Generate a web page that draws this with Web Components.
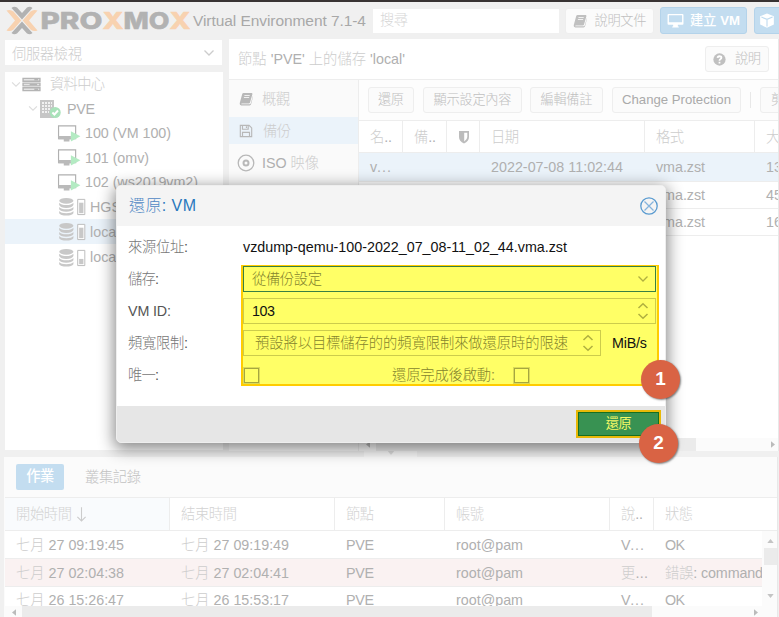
<!DOCTYPE html>
<html lang="zh-Hant"><head><meta charset="utf-8"><title>Proxmox Virtual Environment</title>
<style>
html,body{margin:0;width:779px;height:617px;overflow:hidden;background:#f0f0f0;font:14.3px/20px "Liberation Sans","Noto Sans CJK TC",sans-serif;color:#b0b0b0;--cjk:#cdcdcd}
</style></head><body><pve-app></pve-app>
<script>
const define=(name,html)=>{
  const tpl=document.createElement('template');
  tpl.innerHTML='<style>*{box-sizing:border-box}:host{box-sizing:border-box;display:block}</style>'+html;
  customElements.define(name,class extends HTMLElement{
    connectedCallback(){if(!this.shadowRoot)this.attachShadow({mode:'open'}).append(tpl.content.cloneNode(true));}
  });
};

// One line of text: Han runs take their own tint, and w spreads the line to a given width.
customElements.define('ui-text',class extends HTMLElement{
  connectedCallback(){
    if(this.shadowRoot)return;
    const s=this.getAttribute('t'),r=this.attachShadow({mode:'open'});
    r.innerHTML='<style>:host{display:inline-block;white-space:nowrap;flex:none}.h{color:var(--cjk);font-weight:var(--hw,300)}</style>';
    const box=document.createElement('span');
    for(const run of s.match(/[\u3000-\u9fff]+|[^\u3000-\u9fff]+/g)){
      const e=document.createElement('span');e.textContent=run;
      if(/[\u3000-\u9fff]/.test(run))e.className='h';
      box.append(e);
    }
    r.append(box);
    const w=+this.getAttribute('w');
    if(w)box.style.letterSpacing=((w-box.getBoundingClientRect().width)/(s.length-1))+'px';
    if(w)this.style.width=w+'px';
  }
});

const icons={
 book:['0 0 16 16','<path fill="currentColor" d="M5.2 1h9.3q1.2.2.8 1.6l-2.8 9.6q-.3.8-1.3.8H3.4q-1.2 0-.8 1h9.6q.8 0 1.2-.9L16 4.2v1.3L13.8 14q-.4 1.3-1.7 1.3H2.6Q.5 15 .8 12.8L3.6 2.5Q4 1.1 5.2 1z"/><path stroke="#f7f7f7" d="M6.2 4h6M5.6 6.3h6"/>'],
 monitor:['0 0 18 16','<path fill="currentColor" fill-rule="evenodd" d="M1.500 1h15q1 0 1 1v9.500q0 1-1 1H11.500V14.500h1v1h-7v-1h1v-2H1.500q-1 0-1-1V2q0-1 1-1zM2 2.400v7.400h14V2.400z"/>'],
 cube:['0 0 16 16','<path fill="currentColor" d="M8 .5l7.300 3v8.800L8 15.800.7 12.300V3.500z"/><path fill="none" stroke="#c0dcf0" stroke-width="1.200" d="M2 4.300l6 2.500 6-2.500M8 6.800V14.500"/>'],
 help:['0 0 14 14','<circle cx="7" cy="7" r="6.600" fill="currentColor"/><path fill="none" stroke="#fff" stroke-width="1.900" d="M4.900 5.300Q5 3.500 7 3.500t2.100 1.700Q9.100 6.200 7.800 6.800 7 7.200 7 8.400M7 9.400v1.900"/>'],
 save:['0 0 16 16','<path fill="none" stroke="currentColor" stroke-width="1.300" d="M1.500 1.500h10L14.500 4.500v10h-13zM4 14.500V9.500h8v5M4 1.500v4.500h6.500v-4.500M8.500 2.500v2"/>'],
 disc:['0 0 18 18','<g fill="none" stroke="currentColor"><circle cx="9" cy="9" r="7.800" stroke-width="1.300"/><circle cx="9" cy="9" r="2.500" stroke-width="2"/></g>'],
 shield:['0 0 12 14','<path fill="currentColor" fill-rule="evenodd" d="M1 1h10v6q0 4-5 6.500Q1 11 1 7zM6.200 2.700v8.800Q9.300 9.500 9.300 7V2.700z"/>'],
 servers:['0 0 20 16','<g fill="none" stroke="currentColor" stroke-width="1.500"><path d="M1 1.500h18v3H1zM1 6.500h18v3H1zM1 11.500h18v3H1z" fill="#e4e4e4"/><path d="M13 3h4M8 8h8M13 13h4"/></g>'],
 node:['0 0 22 20','<path fill="#c6c6c6" d="M1 1h14v18H1z"/><path stroke="#fff" stroke-width="1.500" stroke-dasharray="2 1" d="M3 4h10M3 7h10M3 10h9M3 13h7"/><circle cx="16.200" cy="13.500" r="5.500" fill="#a9e2ba"/><path fill="none" stroke="#fff" stroke-width="1.900" d="M13.400 13.500l2 2 3.600-4"/>'],
 vm:['0 0 24 20','<path fill="#fff" stroke="#b0b0b0" stroke-width="1.200" d="M1 2h18v13.500H1z"/><path fill="#bababa" d="M1 12.500h13V16h-1.500v2.500h-6V16H1z"/><path fill="#b4ebc3" d="M14 7.500l10 5.500-10 5.500z"/>'],
 store:['0 0 28 20','<g fill="#c8c8c8"><ellipse cx="8" cy="4" rx="7.500" ry="3"/><path d="M.5 6q2 2.500 7.500 2.500T15.500 6v2.500Q14 11.500 8 11.500T.5 8.500zM.5 10.500Q2.500 13 8 13t7.500-2.500V13Q14 15.500 8 15.500T.5 13zM.5 14.700Q2.500 17 8 17t7.500-2.300V17Q14 19.500 8 19.500T.5 17z"/></g><path fill="#fff" stroke="#bbb" d="M20 2.500h7.500v16H20z"/><path fill="#c8c8c8" d="M21.5 6h4.500v11h-4.500z"/>'],
 down:['0 0 12 8','<path fill="none" stroke="currentColor" stroke-width="1.300" d="M1.500 1.500L6 6l4.500-4.500"/>'],
 spin:['0 0 12 18','<path fill="none" stroke="currentColor" stroke-width="1.500" d="M1.500 6L6 1.700 10.500 6M1.500 12L6 16.300 10.500 12"/>'],
 close:['0 0 18 18','<g fill="none" stroke="#5a9bd0" stroke-width="1.300"><circle cx="9" cy="9" r="8.200"/><path stroke="#85b3dc" d="M4.500 4.500l9 9m0-9l-9 9"/></g>'],
 arrow:['0 0 12 18','<path fill="none" stroke="currentColor" stroke-width="1.200" d="M6 1v15M1.500 11.500L6 16l4.500-4.500"/>'],
 left:['0 0 5 8','<path fill="currentColor" d="M5 0v8L0 4z"/>'],
 right:['0 0 5 8','<path fill="currentColor" d="M0 0v8l5-4z"/>'],
 tup:['0 0 8 5','<path fill="currentColor" d="M0 5h8L4 0z"/>'],
 tdown:['0 0 8 5','<path fill="currentColor" d="M0 0h8L4 5z"/>']
};
icons.storelow=[icons.store[0],icons.store[1].replace('M21.5 6h4.500v11','M21.5 11.500h4.500v5.500')];
customElements.define('ui-icon',class extends HTMLElement{
  connectedCallback(){
    if(this.shadowRoot)return;
    const [vb,body]=icons[this.getAttribute('n')],w=this.getAttribute('w'),h=this.getAttribute('h');
    this.attachShadow({mode:'open'}).innerHTML=`<style>:host{display:block;flex:none;width:${w}px;height:${h}px}svg{display:block}</style><svg width="${w}" height="${h}" viewBox="${vb}">${body}</svg>`;
  }
});

define('ui-button',`<style>:host{display:flex;align-items:center;justify-content:center;flex:none;height:26px;border:1px solid #eee;border-radius:3px;background:#fbfbfb;font-size:13.2px;--cjk:#c0c0c0;color:#aaa;overflow:hidden}
:host([primary]){background:#c3ddf0;border-color:#b4d3ea;color:#fff;--cjk:#fff;--hw:500;font-weight:bold}</style><slot></slot>`);

define('pve-logo',`<style>:host{width:185px;height:32px;flex:none}svg{display:block}</style>
<svg width="185" height="32" viewBox="0 0 185 32"><g fill="#b2b2b2"><path d="M5.500 3Q8 .8 11 2.500L16 8l5-5.500q3-1.700 5.500.5L16 14.500z"/><path d="M5.500 28Q8 30.200 11 28.500L16 23l5 5.500q3 1.700 5.500-.5L16 16.500z"/></g>
<g fill="#f8d2b0"><path d="M.5 5.500Q4.500 4 7.500 6.500L15.300 15.500 7.500 24.500Q4.500 27 .5 25.500L9 15.500z"/><path d="M31.500 5.500Q27.500 4 24.500 6.500L16.700 15.500l7.800 9q3 2.500 7 1L23 15.500z"/></g>
<g font-family="Inter" font-weight="800" font-size="23.500" fill="#b2b2b2" stroke="#b2b2b2" stroke-width=".5"><text x="34.500" y="24" textLength="62" lengthAdjust="spacingAndGlyphs">PRO</text><text x="117.500" y="24" textLength="46" lengthAdjust="spacingAndGlyphs">MO</text><g fill="#f8d2b0" stroke="#f8d2b0"><text x="96.500" y="24" textLength="21" lengthAdjust="spacingAndGlyphs">X</text><text x="163.500" y="24" textLength="21" lengthAdjust="spacingAndGlyphs">X</text></g></g></svg>`);

define('pve-header',`<style>:host{display:flex;height:37px;padding-left:6px;align-items:center;overflow:hidden}
.title{margin-left:2px;margin-top:1px;font-size:15.500px;color:#a8a8a8}.search{flex:none;width:186px;height:24px;margin-left:7px;background:#fff;padding:1px 7px;--cjk:#d6d6d6}
ui-button{margin-left:6px}</style>
<pve-logo></pve-logo><ui-text class="title" t="Virtual Environment 7.1-4" w="173"></ui-text><div class="search"><ui-text t="搜尋" w="28"></ui-text></div>
<ui-button style="width:89px;margin-left:6px;gap:8px"><ui-icon n="book" w="14" h="14" style="color:#c0c0c0"></ui-icon><ui-text t="說明文件" w="52"></ui-text></ui-button>
<ui-button primary style="width:87px;height:27px;margin-left:6px;gap:6px"><ui-icon n="monitor" w="17" h="15"></ui-icon><ui-text t="建立 VM" w="50"></ui-text></ui-button>
<ui-button primary style="width:50px;height:27px;margin-left:7px;justify-content:flex-start;padding-left:4px"><ui-icon n="cube" w="16" h="15"></ui-icon></ui-button>`);

define('tree-row',`<style>:host{display:flex;align-items:center;height:25px;gap:8px;overflow:hidden}:host([on]){background:#ebf3fa}</style><slot></slot>`);
define('pve-tree',`<style>:host{width:218px;display:flex;flex-direction:column;gap:7px}
.sel{height:25px;width:217px;background:#fff;display:flex;align-items:center;justify-content:space-between;padding:3px 7px 0}
.tree{background:#fff;height:378px;overflow:hidden}tree-row{height:24.500px}</style>
<div class="sel"><ui-text t="伺服器檢視" w="70"></ui-text><ui-icon n="down" w="12" h="8" style="color:#ccc;margin-bottom:3px"></ui-icon></div>
<div class="tree">
<tree-row style="padding-left:5px;gap:0"><ui-icon n="down" w="12" h="7" style="color:#ddd"></ui-icon><ui-icon n="servers" w="19" h="15" style="color:#b4b4b4;margin-right:9px"></ui-icon><ui-text t="資料中心" w="55"></ui-text></tree-row>
<tree-row style="padding-left:22px;gap:0"><ui-icon n="down" w="12" h="7" style="color:#ddd"></ui-icon><ui-icon n="node" w="22" h="20" style="margin-right:6px"></ui-icon><ui-text t="PVE" w="28"></ui-text></tree-row>
<tree-row style="padding-left:52px;gap:4px"><ui-icon n="vm" w="24" h="19"></ui-icon><ui-text t="100 (VM 100)" w="86"></ui-text></tree-row>
<tree-row style="padding-left:52px;gap:4px"><ui-icon n="vm" w="24" h="19"></ui-icon><ui-text t="101 (omv)" w="64"></ui-text></tree-row>
<tree-row style="padding-left:52px;gap:4px"><ui-icon n="vm" w="24" h="19"></ui-icon><ui-text t="102 (ws2019vm2)" w="113"></ui-text></tree-row>
<tree-row style="padding-left:53px;gap:4px;"><ui-icon n="store" w="28" h="19"></ui-icon><ui-text t="HGST"></ui-text></tree-row>
<tree-row on style="padding-left:53px;gap:4px;height:25px"><ui-icon n="store" w="28" h="19"></ui-icon><ui-text t="local"></ui-text></tree-row>
<tree-row style="padding-left:53px;gap:4px;height:26px"><ui-icon n="storelow" w="28" h="19"></ui-icon><ui-text t="local"></ui-text></tree-row>
</div>`);

define('data-row',`<style>:host{display:grid;align-items:center;overflow:hidden;height:27px;border-bottom:1px solid #ededed}::slotted(*){margin-left:11px}
:host([head]) ::slotted(*){align-self:stretch;display:flex!important;align-items:center}</style><slot></slot>`);

define('scroll-x',`<style>:host{display:flex;align-items:center;justify-content:space-between;background:#fbfbfb;color:#bbb;overflow:hidden}.l{width:17px;display:flex;justify-content:center}.thumb{height:100%;background:#ebebeb;width:var(--thumb)}.r{margin-left:auto;margin-right:var(--end,3px)}</style>
<span class="l"><ui-icon n="left" w="4" h="7"></ui-icon></span><span class="thumb"></span><span class="r"><ui-icon n="right" w="4" h="7"></ui-icon></span>`);

define('pve-content',`<style>:host{width:550px;height:412px;background:#fff;display:grid;grid-template:41px 1fr / 130px 1fr;border-right:1px solid #e8e8e8;overflow:hidden}
.top{grid-column:1/3;display:flex;align-items:center;justify-content:space-between;padding:0 9px;border-bottom:1px solid #ededed}
.side{background:#fafafa;border-right:1px solid #ededed;padding-top:5px}
.item{display:flex;align-items:center;height:27px;padding-left:10px;gap:9px;margin-bottom:5px}.item ui-icon{color:#b8b8b8}.item.on{background:#ebf3fa}
.main{display:flex;flex-direction:column;min-width:0;overflow:hidden}
.bar{height:41px;flex:none;display:flex;align-items:center;border-bottom:1px solid #ededed;padding-left:9px;background:#fdfdfd;overflow:hidden}
data-row{grid-template-columns:44px 44px 33px 165px 110px 100px;flex:none}
.c{height:32px;border-right:1px solid #ededed;margin:0!important;padding-left:11px}
scroll-x{margin-top:auto;height:13px;--thumb:320px}</style>
<div class="top"><ui-text t="節點 'PVE' 上的儲存 'local'" w="167"></ui-text><ui-button style="width:64px;gap:9px"><ui-icon n="help" w="13" h="13" style="color:#c0c0c0"></ui-icon><ui-text t="說明" w="26"></ui-text></ui-button></div>
<div class="side"><div class="item"><ui-icon n="book" w="14" h="14"></ui-icon><ui-text t="概觀" w="28"></ui-text></div>
<div class="item on" style="gap:10px"><ui-icon n="save" w="14" h="14"></ui-icon><ui-text t="備份" w="28"></ui-text></div>
<div class="item" style="gap:7px;padding-left:8px"><ui-icon n="disc" w="18" h="18"></ui-icon><ui-text t="ISO 映像" w="57"></ui-text></div></div>
<div class="main"><div class="bar"><ui-button style="width:46px"><ui-text t="還原" w="26"></ui-text></ui-button><ui-button style="width:99px;margin-left:9px"><ui-text t="顯示設定內容" w="78"></ui-text></ui-button><ui-button style="width:73px;margin-left:8px"><ui-text t="編輯備註" w="52"></ui-text></ui-button><ui-button style="width:129px;margin-left:9px"><ui-text t="Change Protection" w="109"></ui-text></ui-button><span style="flex:none;width:1px;height:16px;background:#e8e8e8;margin:0 9px"></span><ui-button style="width:60px;justify-content:flex-start;padding-left:10px"><ui-text t="剪除"></ui-text></ui-button></div>
<data-row head style="height:32px"><div class="c"><ui-text t="名.." w="22"></ui-text></div><div class="c"><ui-text t="備.." w="22"></ui-text></div><div class="c"><ui-icon n="shield" w="12" h="14" style="color:#bcbcbc"></ui-icon></div><div class="c"><ui-text t="日期" w="28"></ui-text></div><div class="c"><ui-text t="格式" w="28"></ui-text></div><div class="c" style="border:0"><ui-text t="大小"></ui-text></div></data-row>
<data-row style="background:#ebf3fa;height:29px"><ui-text t="v..." w="21"></ui-text><i></i><i></i><ui-text t="2022-07-08 11:02:44" w="132"></ui-text><ui-text t="vma.zst" w="49"></ui-text><ui-text t="13"></ui-text></data-row>
<data-row><i></i><i></i><i></i><i></i><ui-text t="vma.zst" w="49"></ui-text><ui-text t="45"></ui-text></data-row>
<data-row><i></i><i></i><i></i><i></i><ui-text t="vma.zst" w="49"></ui-text><ui-text t="16"></ui-text></data-row>
<scroll-x></scroll-x></div>`);

define('task-log',`<style>:host{margin-left:4px;width:774px;height:160px;background:#fbfbfb;border-right:1px solid #e8e8e8;overflow:hidden;display:flex;flex-direction:column}
.tabs{height:40px;flex:none;display:flex;align-items:center;padding-left:12px;gap:21px;--cjk:#c2c2c2}.tab{width:48px;height:26px;background:#c3ddf0;border-radius:2px;text-align:center;line-height:25px;--cjk:#fff;--hw:500}
.grid{position:relative;flex:1;margin-left:1px;border-top:1px solid #ededed;background:#fff;display:flex;flex-direction:column}
data-row{grid-template-columns:165px 165px 110px 165px 44px 124px;height:28px;flex:none}data-row.h{height:33px;--cjk:#d3d3d3}
.c{border-right:1px solid #ededed;margin:0!important;padding-left:11px}
.rows{display:flex;height:75px;flex:none}.list{width:757px;overflow:hidden}.red{background:#faf2f2}
.v{width:15px;display:flex;flex-direction:column;align-items:center;justify-content:space-between;background:#fbfbfb;color:#c4c4c4;padding:8px 0 8px 2px}.thumb{width:13px;height:17px;background:#ebebeb;margin-bottom:24px}
scroll-x{--thumb:630px;--end:19px;height:12px;margin:0}</style>
<div class="tabs"><div class="tab"><ui-text t="作業" w="28"></ui-text></div><ui-text t="叢集記錄" w="56"></ui-text></div>
<div class="grid"><data-row head class="h"><div class="c" style="background:#f9fbfd;gap:4px"><ui-text t="開始時間" w="56"></ui-text><ui-icon n="arrow" w="11" h="17" style="color:#ccc"></ui-icon></div><div class="c"><ui-text t="結束時間" w="56"></ui-text></div><div class="c"><ui-text t="節點" w="28"></ui-text></div><div class="c"><ui-text t="帳號" w="28"></ui-text></div><div class="c"><ui-text t="說.." w="22"></ui-text></div><div class="c"><ui-text t="狀態" w="28"></ui-text></div></data-row>
<div class="rows"><div class="list">
<data-row><ui-text t="七月 27 09:19:45" w="108"></ui-text><ui-text t="七月 27 09:19:49" w="108"></ui-text><ui-text t="PVE" w="28"></ui-text><ui-text t="root@pam" w="67"></ui-text><ui-text t="V..." w="23"></ui-text><ui-text t="OK" w="20"></ui-text></data-row>
<data-row class="red"><ui-text t="七月 27 02:04:38" w="108"></ui-text><ui-text t="七月 27 02:04:41" w="108"></ui-text><ui-text t="PVE" w="28"></ui-text><ui-text t="root@pam" w="67"></ui-text><ui-text t="更..." w="27"></ui-text><ui-text t="錯誤: command" w="98"></ui-text></data-row>
<data-row style="height:27px"><ui-text t="七月 26 15:26:47" w="108"></ui-text><ui-text t="七月 26 15:53:17" w="108"></ui-text><ui-text t="PVE" w="28"></ui-text><ui-text t="root@pam" w="67"></ui-text><ui-text t="V..." w="23"></ui-text><ui-text t="OK" w="20"></ui-text></data-row>
</div><div class="v"><ui-icon n="tup" w="7" h="4"></ui-icon><span class="thumb"></span><ui-icon n="tdown" w="7" h="4"></ui-icon></div></div><scroll-x></scroll-x></div>`);

define('form-row',`<style>:host{display:grid;grid-template-columns:115px 1fr;align-items:center;height:26px}</style><slot name="label"></slot><slot></slot>`);
define('form-field',`<style>:host{display:flex;align-items:center;justify-content:space-between;height:26px;border:1px solid #cccc4c;padding:0 6px 0 8px;color:#b0b040}:host([focus]){border:1px solid #388044}</style><slot></slot>`);
define('step-badge',`<style>:host{position:absolute;width:39px;height:39px;border-radius:50%;background:#d96344;box-shadow:1px 1px 2px #0007;color:#fff;font:bold 19px/37px "Liberation Sans",sans-serif;text-align:center}</style><slot></slot>`);
define('restore-dialog',`<style>:host{position:absolute;left:116px;top:183px;width:550px;height:258px;border:1px solid #eee;border-radius:5px;background:#fff;box-shadow:0 4px 16px 2px #0007;color:#555;--cjk:#777}
header{height:40px;background:#f4f4f4;border-radius:4px 4px 0 0;display:flex;justify-content:space-between;align-items:center;padding:0 7px 0 12px;font-size:16px;color:#2878bd;--cjk:#5088c4}
main{height:180px;padding:8px 9px 0 11px;display:flex;flex-direction:column;gap:6px}
footer{height:36px;background:#e6e6e6;border-radius:0 0 4px 4px;display:flex;justify-content:flex-end;padding:4px 4px 0}
.k{color:#111}.mark{position:absolute;left:124px;top:79px;width:418px;height:121px;background:#ff6;border:2px solid #fc0;border-width:1px 2px 2px 2px}
form-row{position:relative}form-field{width:413px}.y{--cjk:#85852e}.box{width:15px;height:15px;border:1.500px solid #a6a640;outline:.5px solid #a6a64066}
.go{width:85px;height:28px;border:2px solid #e8b908;background:#389252;color:#ff6;--cjk:#f4f866;--hw:400;box-shadow:inset 0 0 0 1px #176f20;text-align:center;font-size:13.200px;line-height:23px}</style>
<header><ui-text t="還原: VM" w="67"></ui-text><ui-icon n="close" w="18" h="18"></ui-icon></header>
<div class="mark"></div>
<main><form-row><ui-text slot="label" t="來源位址:" w="60"></ui-text><ui-text class="k" t="vzdump-qemu-100-2022_07_08-11_02_44.vma.zst" w="324"></ui-text></form-row>
<form-row><ui-text slot="label" t="儲存:" w="31"></ui-text><form-field class="y" focus><ui-text t="從備份設定" w="70"></ui-text><ui-icon n="down" w="12" h="8"></ui-icon></form-field></form-row>
<form-row><ui-text slot="label" t="VM ID:" w="43"></ui-text><form-field><ui-text class="k" t="103" w="23"></ui-text><ui-icon n="spin" w="12" h="18"></ui-icon></form-field></form-row>
<form-row><ui-text slot="label" t="頻寬限制:" w="60"></ui-text><div class="y" style="display:flex;align-items:center;gap:11px"><form-field style="width:358px;padding-left:11px"><ui-text t="預設將以目標儲存的的頻寬限制來做還原時的限速" w="313"></ui-text><ui-icon n="spin" w="12" h="18"></ui-icon></form-field><ui-text class="k" t="MiB/s" w="35"></ui-text></div></form-row>
<form-row><ui-text slot="label" t="唯一:" w="31"></ui-text><div class="y" style="display:flex;align-items:center;padding-left:1px;color:#93933c"><span class="box"></span><ui-text style="margin-left:133px" t="還原完成後啟動:" w="103"></ui-text><span class="box" style="margin-left:19px"></span></div></form-row></main>
<footer><div class="go"><ui-text t="還原" w="26"></ui-text></div></footer>
<step-badge style="left:524px;top:173.500px">1</step-badge><step-badge style="left:522px;top:237.500px">2</step-badge>`);

define('pve-app',`<style>:host{position:relative;width:779px;height:617px;overflow:hidden;border-top:2px solid #383333}
.mid{display:flex;gap:6px;padding-left:5px;height:412px}pve-tree{padding-top:1px;flex:none}pve-content{flex:none}
.split{height:6px;padding-left:364px}.handle{width:53px;height:6px;background:#f8f8f8;color:#ddd;display:flex;justify-content:center}</style>
<pve-header></pve-header><div class="mid"><pve-tree></pve-tree><pve-content></pve-content></div><div class="split"><div class="handle"><ui-icon n="tdown" w="10" h="4"></ui-icon></div></div><task-log></task-log>
<restore-dialog></restore-dialog>`);
</script></body></html>
